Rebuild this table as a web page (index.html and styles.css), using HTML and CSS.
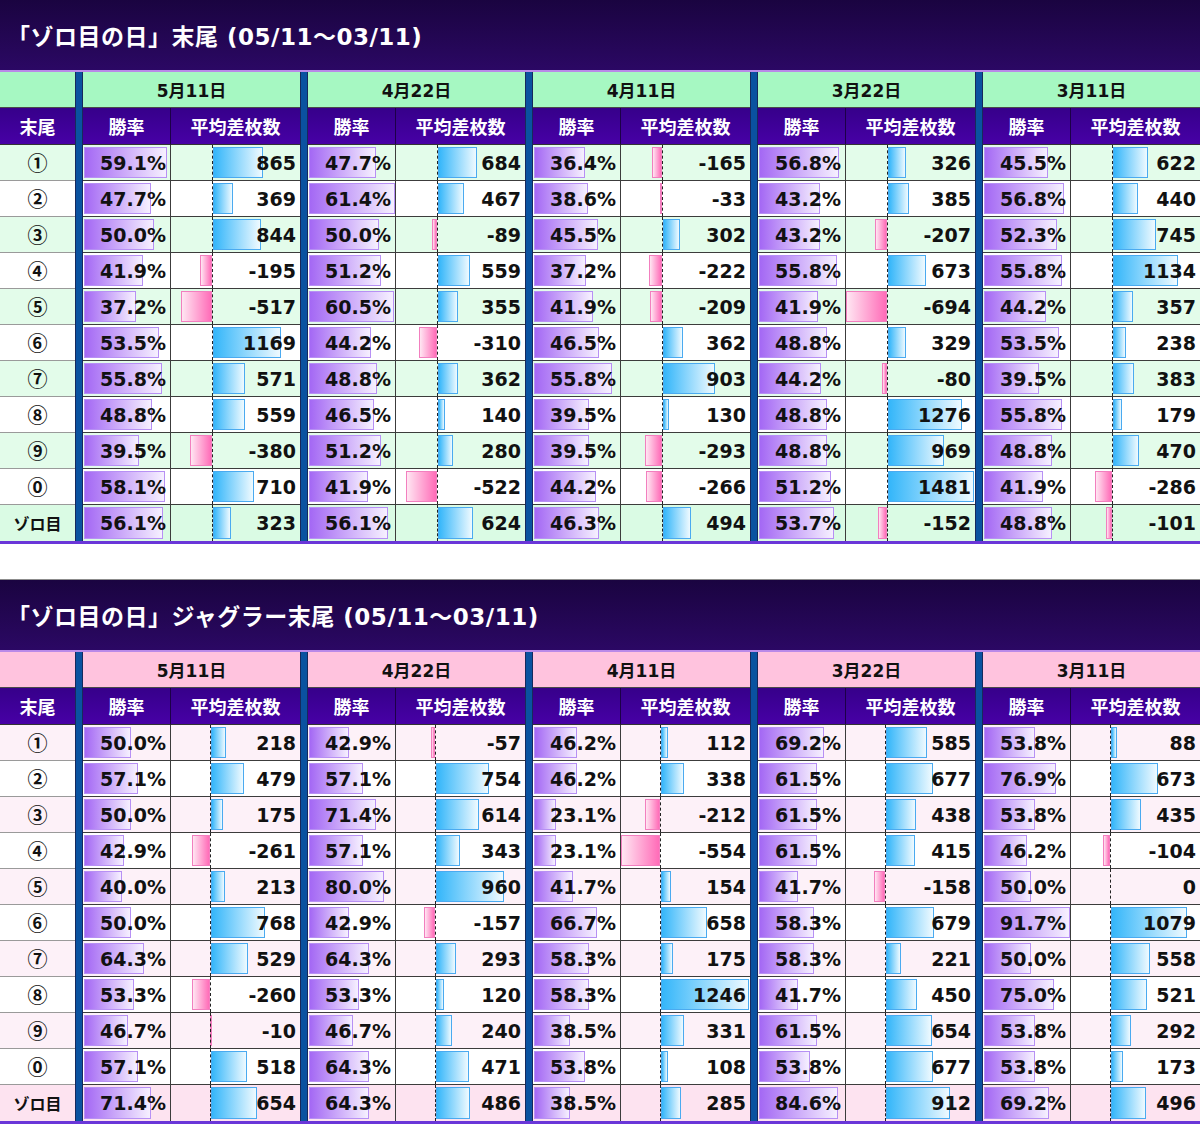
FILE: index.html
```html
<!DOCTYPE html>
<html lang="ja">
<head>
<meta charset="utf-8">
<title>ゾロ目の日 末尾</title>
<link rel="stylesheet" href="styles.css">
</head>
<body>
<section class="block green">
  <h2 class="title">「ゾロ目の日」末尾 (05/11～03/11)</h2>
  <div class="grid" id="t1"></div>
</section>
<section class="block pink">
  <h2 class="title">「ゾロ目の日」ジャグラー末尾 (05/11～03/11)</h2>
  <div class="grid" id="t2"></div>
</section>
<script src="script.js"></script>
</body>
</html>
```

FILE: styles.css
```css
html, body {
  margin: 0;
  padding: 0;
  background: #ffffff;
}
body {
  width: 1200px;
  font-family: "DejaVu Sans", "Noto Sans CJK JP", sans-serif;
  color: #111111;
}
.block {
  width: 1200px;
}
.block + .block {
  margin-top: 35px;
  border-top: 1px solid #8c8c8c;
}
.title {
  margin: 0;
  height: 70px;
  display: flex;
  align-items: center;
  padding-left: 7px;
  background: linear-gradient(#1a0440, #2b0864);
  color: #ffffff;
  font-size: 23px;
  font-weight: bold;
  letter-spacing: 0.5px;
  border-bottom: 2px solid #b98ae8;
}
.grid {
  display: grid;
  grid-template-columns: 75px repeat(5, 8px 88px 129px);
  grid-template-rows: 36px 37px repeat(11, 36px);
  border-bottom: 3px solid #6a36d8;
}
.sep {
  grid-row: 1 / -1;
  background: #0a52a0;
  border-left: 1px solid #17295c;
  border-right: 1px solid #17295c;
}
.s1 { grid-column: 2; }
.s2 { grid-column: 5; }
.s3 { grid-column: 8; }
.s4 { grid-column: 11; }
.s5 { grid-column: 14; }

.corner, .date {
  border-bottom: 1px solid #4a4a4a;
}
.green .corner, .green .date { background: #a6f8c2; }
.pink .corner, .pink .date { background: #ffc3de; }
.date {
  grid-column: span 2;
  display: flex;
  align-items: center;
  justify-content: center;
  font-size: 17px;
  font-weight: bold;
}
.ch {
  display: flex;
  align-items: center;
  justify-content: center;
  background: linear-gradient(#36008a, #4700a6);
  color: #ffffff;
  font-size: 18px;
  font-weight: bold;
  border-bottom: 1px solid #333333;
}
.ch.cw {
  border-right: 1px solid #1c0048;
}
.c {
  position: relative;
  display: flex;
  align-items: center;
  justify-content: flex-end;
  padding-right: 4px;
  border-bottom: 1px solid #3c3c3c;
  font-size: 19px;
  font-weight: bold;
  background: #ffffff;
}
.c.last {
  border-bottom: none;
}
.c.win {
  border-right: 1px solid #3c3c3c;
}
.c.label {
  justify-content: center;
  padding-right: 0;
  font-family: "Noto Sans CJK JP", "DejaVu Sans", sans-serif;
  font-size: 20px;
  border-bottom-color: #9a9a9a;
}
.c.zoro {
  font-size: 16px;
}
.green .odd { background: #e3fcea; }
.green .last { background: #dafbe4; }
.pink .odd { background: #fdf1f8; }
.pink .last { background: #fde3f0; }

.num {
  position: relative;
}
.bar {
  position: absolute;
  top: 2px;
  bottom: 2px;
  box-sizing: border-box;
}
.wbar {
  left: 1px;
  background: linear-gradient(to right, #a468f4, #f6f0ff);
  border: 1px solid #b790f4;
}
.pbar {
  background: linear-gradient(to right, #34b6fa, #effaff);
  border: 1px solid #4aaaf0;
}
.nbar {
  background: linear-gradient(to right, #ffe6f2, #ff6cb8);
  border: 1px solid #f27fbf;
}
.axis {
  position: absolute;
  top: 0;
  bottom: 0;
  width: 0;
  border-left: 1px dashed #222222;
}
```

FILE: script.js
```js
const LABELS = ['①','②','③','④','⑤','⑥','⑦','⑧','⑨','⓪','ゾロ目'];
const DATES = ['5月11日','4月22日','4月11日','3月22日','3月11日'];
const TABLES = [
  { id: 't1', cols: [
    "59.1 865|47.7 369|50.0 844|41.9 -195|37.2 -517|53.5 1169|55.8 571|48.8 559|39.5 -380|58.1 710|56.1 323",
    "47.7 684|61.4 467|50.0 -89|51.2 559|60.5 355|44.2 -310|48.8 362|46.5 140|51.2 280|41.9 -522|56.1 624",
    "36.4 -165|38.6 -33|45.5 302|37.2 -222|41.9 -209|46.5 362|55.8 903|39.5 130|39.5 -293|44.2 -266|46.3 494",
    "56.8 326|43.2 385|43.2 -207|55.8 673|41.9 -694|48.8 329|44.2 -80|48.8 1276|48.8 969|51.2 1481|53.7 -152",
    "45.5 622|56.8 440|52.3 745|55.8 1134|44.2 357|53.5 238|39.5 383|55.8 179|48.8 470|41.9 -286|48.8 -101"
  ]},
  { id: 't2', cols: [
    "50.0 218|57.1 479|50.0 175|42.9 -261|40.0 213|50.0 768|64.3 529|53.3 -260|46.7 -10|57.1 518|71.4 654",
    "42.9 -57|57.1 754|71.4 614|57.1 343|80.0 960|42.9 -157|64.3 293|53.3 120|46.7 240|64.3 471|64.3 486",
    "46.2 112|46.2 338|23.1 -212|23.1 -554|41.7 154|66.7 658|58.3 175|58.3 1246|38.5 331|53.8 108|38.5 285",
    "69.2 585|61.5 677|61.5 438|61.5 415|41.7 -158|58.3 679|58.3 221|41.7 450|61.5 654|53.8 677|84.6 912",
    "53.8 88|76.9 673|53.8 435|46.2 -104|50.0 0|91.7 1079|50.0 558|75.0 521|53.8 292|53.8 173|69.2 496"
  ]}
];

function el(cls, text) {
  const d = document.createElement('div');
  d.className = cls;
  if (text != null) d.textContent = text;
  return d;
}

TABLES.forEach(t => {
  const grid = document.getElementById(t.id);
  const cols = t.cols.map(s => s.split('|').map(p => p.split(' ')));
  let wmax = 0, dmin = 0, dmax = 0;
  cols.forEach(c => c.forEach(([w, d]) => {
    wmax = Math.max(wmax, parseFloat(w));
    dmin = Math.min(dmin, parseInt(d, 10));
    dmax = Math.max(dmax, parseInt(d, 10));
  }));
  const WW = 86, DW = 128;
  const scale = DW / (dmax - dmin);
  const axis = -dmin * scale;

  for (let i = 1; i <= 5; i++) grid.append(el('sep s' + i));
  grid.append(el('corner'));
  DATES.forEach(d => grid.append(el('date', d)));
  grid.append(el('ch', '末尾'));
  DATES.forEach(() => {
    grid.append(el('ch cw', '勝率'));
    grid.append(el('ch', '平均差枚数'));
  });

  for (let r = 0; r < 11; r++) {
    const rc = r === 10 ? 'last' : (r % 2 === 0 ? 'odd' : 'even');
    grid.append(el('c label ' + rc + (r === 10 ? ' zoro' : ''), LABELS[r]));
    cols.forEach(c => {
      const [ws, ds] = c[r];
      const wv = parseFloat(ws), dv = parseInt(ds, 10);
      const wc = el('c win ' + rc);
      const wb = el('bar wbar');
      wb.style.width = (wv / wmax * WW).toFixed(1) + 'px';
      wc.append(wb);
      wc.append(el('num', ws + '%'));
      grid.append(wc);

      const dc = el('c diff ' + rc);
      if (dv !== 0) {
        const len = Math.abs(dv) * scale;
        const b = el('bar ' + (dv > 0 ? 'pbar' : 'nbar'));
        if (dv > 0) {
          b.style.left = (axis + 1).toFixed(1) + 'px';
          b.style.width = Math.max(len - 1, 1).toFixed(1) + 'px';
        } else {
          b.style.left = (axis - len).toFixed(1) + 'px';
          b.style.width = Math.max(len, 1).toFixed(1) + 'px';
        }
        dc.append(b);
      }
      const ax = el('axis');
      ax.style.left = axis.toFixed(1) + 'px';
      dc.append(ax);
      dc.append(el('num', ds));
      grid.append(dc);
    });
  }
});
```
